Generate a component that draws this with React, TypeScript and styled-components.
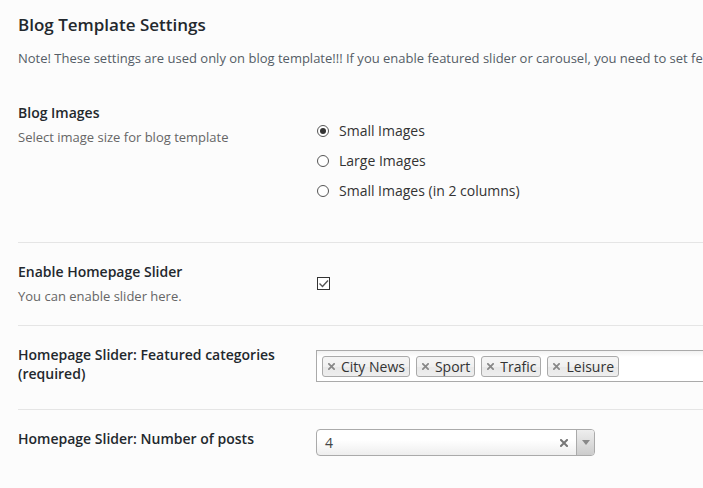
import React from "react";
import styled, { createGlobalStyle } from "styled-components";

const Global = createGlobalStyle`
  html, body { margin: 0; padding: 0; background: #fcfcfc; overflow: hidden; }
  body { font-family: "Open Sans", "DejaVu Sans", sans-serif; color: #23282d; }
  * { box-sizing: border-box; }
`;

const Page = styled.div`
  padding: 0 0 0 18px;
  width: 703px;
  height: 488px;
  overflow: hidden;
`;

const Title = styled.h2`
  margin: 12px 0 0;
  font-size: 17px;
  font-weight: 600;
  line-height: 25px;
  color: #23282d;
`;

const Note = styled.p`
  margin: 12px 0 17px;
  font-size: 13px;
  line-height: 18px;
  color: #555d66;
  white-space: nowrap;
`;

const Row = styled.div<{ $h: number; $last?: boolean }>`
  display: grid;
  grid-template-columns: 280px 1fr;
  column-gap: 18px;
  height: ${(p) => p.$h}px;
  border-bottom: ${(p) => (p.$last ? "none" : "1px solid #e5e5e5")};
  width: 800px;
`;

const LabelCol = styled.div`
  padding-top: 19px;
`;

const Label = styled.div`
  font-size: 14px;
  font-weight: 600;
  line-height: 19px;
  color: #23282d;
`;

const Desc = styled.div`
  margin-top: 6px;
  font-size: 13px;
  line-height: 18px;
  color: #666;
`;

const Field = styled.div<{ $pt: number }>`
  padding-top: ${(p) => p.$pt}px;
`;

const RadioList = styled.div`
  display: flex;
  flex-direction: column;
  gap: 12px;
`;

const RadioRow = styled.label`
  display: flex;
  align-items: center;
  gap: 10px;
  font-size: 14px;
  line-height: 18px;
  color: #333;
  padding-left: 1px;
`;

const RadioDot = styled.span<{ $on?: boolean }>`
  width: 12px;
  height: 12px;
  border-radius: 50%;
  border: 1px solid #555;
  background: #fff;
  display: flex;
  align-items: center;
  justify-content: center;
  &::after {
    content: "";
    width: 6px;
    height: 6px;
    border-radius: 50%;
    background: ${(p) => (p.$on ? "#333" : "transparent")};
  }
`;

const Check = styled.span`
  display: flex;
  align-items: center;
  justify-content: center;
  width: 13px;
  height: 13px;
  margin-left: 1px;
  border: 1px solid #333;
  background: #fff;
`;

const MultiBox = styled.div`
  width: 420px;
  height: 32px;
  border: 1px solid #aaa;
  background: linear-gradient(#f2f2f2 0px, #fff 6px);
  display: flex;
  align-items: center;
  gap: 6px;
  padding-left: 5px;
`;

const Tag = styled.span`
  display: inline-flex;
  align-items: center;
  gap: 6px;
  height: 21px;
  padding: 0 4px 0 5px;
  border: 1px solid #aaa;
  border-radius: 3px;
  background: linear-gradient(#f4f4f4 20%, #f0f0f0 50%, #e8e8e8 52%, #eee 100%);
  font-size: 14px;
  color: #333;
  line-height: 19px;
`;

const SelectBox = styled.div`
  width: 279px;
  height: 27px;
  border: 1px solid #aaa;
  border-radius: 4px;
  background: linear-gradient(#fff 40%, #eee 100%);
  display: flex;
  align-items: stretch;
  overflow: hidden;
`;

const SelectValue = styled.span`
  flex: 1;
  padding-left: 8px;
  font-size: 14px;
  line-height: 25px;
  color: #444;
`;

const ClearX = styled.span`
  display: flex;
  align-items: center;
  padding-right: 8px;
`;

const ArrowBox = styled.span`
  width: 18px;
  border-left: 1px solid #aaa;
  background: linear-gradient(#eee, #ccc);
  display: flex;
  align-items: center;
  justify-content: center;
`;

const XIcon = ({ size, color }: { size: number; color: string }) => (
  <svg width={size} height={size} viewBox="0 0 8 8">
    <path d="M1 1 L7 7 M7 1 L1 7" stroke={color} strokeWidth="2" strokeLinecap="square" />
  </svg>
);

const tags = ["City News", "Sport", "Trafic", "Leisure"];
const radios = ["Small Images", "Large Images", "Small Images (in 2 columns)"];

export default function App() {
  return (
    <>
      <Global />
      <Page>
        <Title>Blog Template Settings</Title>
        <Note>
          Note! These settings are used only on blog template!!! If you enable featured slider or carousel, you need to set featured categories.
        </Note>

        <Row $h={159}>
          <LabelCol>
            <Label>Blog Images</Label>
            <Desc>Select image size for blog template</Desc>
          </LabelCol>
          <Field $pt={38}>
            <RadioList>
              {radios.map((r, i) => (
                <RadioRow key={r}>
                  <RadioDot $on={i === 0} />
                  {r}
                </RadioRow>
              ))}
            </RadioList>
          </Field>
        </Row>

        <Row $h={83}>
          <LabelCol>
            <Label>Enable Homepage Slider</Label>
            <Desc>You can enable slider here.</Desc>
          </LabelCol>
          <Field $pt={34}>
            <Check>
              <svg width="11" height="11" viewBox="0 0 11 11">
                <path d="M1.5 5.5 L4.5 8.5 L10 2.5" fill="none" stroke="#555" strokeWidth="1.4" />
              </svg>
            </Check>
          </Field>
        </Row>

        <Row $h={84}>
          <LabelCol>
            <Label>Homepage Slider: Featured categories (required)</Label>
          </LabelCol>
          <Field $pt={24}>
            <MultiBox>
              {tags.map((t) => (
                <Tag key={t}>
                  <XIcon size={7} color="#888" />
                  {t}
                </Tag>
              ))}
            </MultiBox>
          </Field>
        </Row>

        <Row $h={80} $last>
          <LabelCol>
            <Label>Homepage Slider: Number of posts</Label>
          </LabelCol>
          <Field $pt={19}>
            <SelectBox>
              <SelectValue>4</SelectValue>
              <ClearX>
                <XIcon size={8} color="#777" />
              </ClearX>
              <ArrowBox>
                <svg width="8" height="5" viewBox="0 0 8 5">
                  <path d="M0 0 L8 0 L4 5 Z" fill="#888" />
                </svg>
              </ArrowBox>
            </SelectBox>
          </Field>
        </Row>
      </Page>
    </>
  );
}
